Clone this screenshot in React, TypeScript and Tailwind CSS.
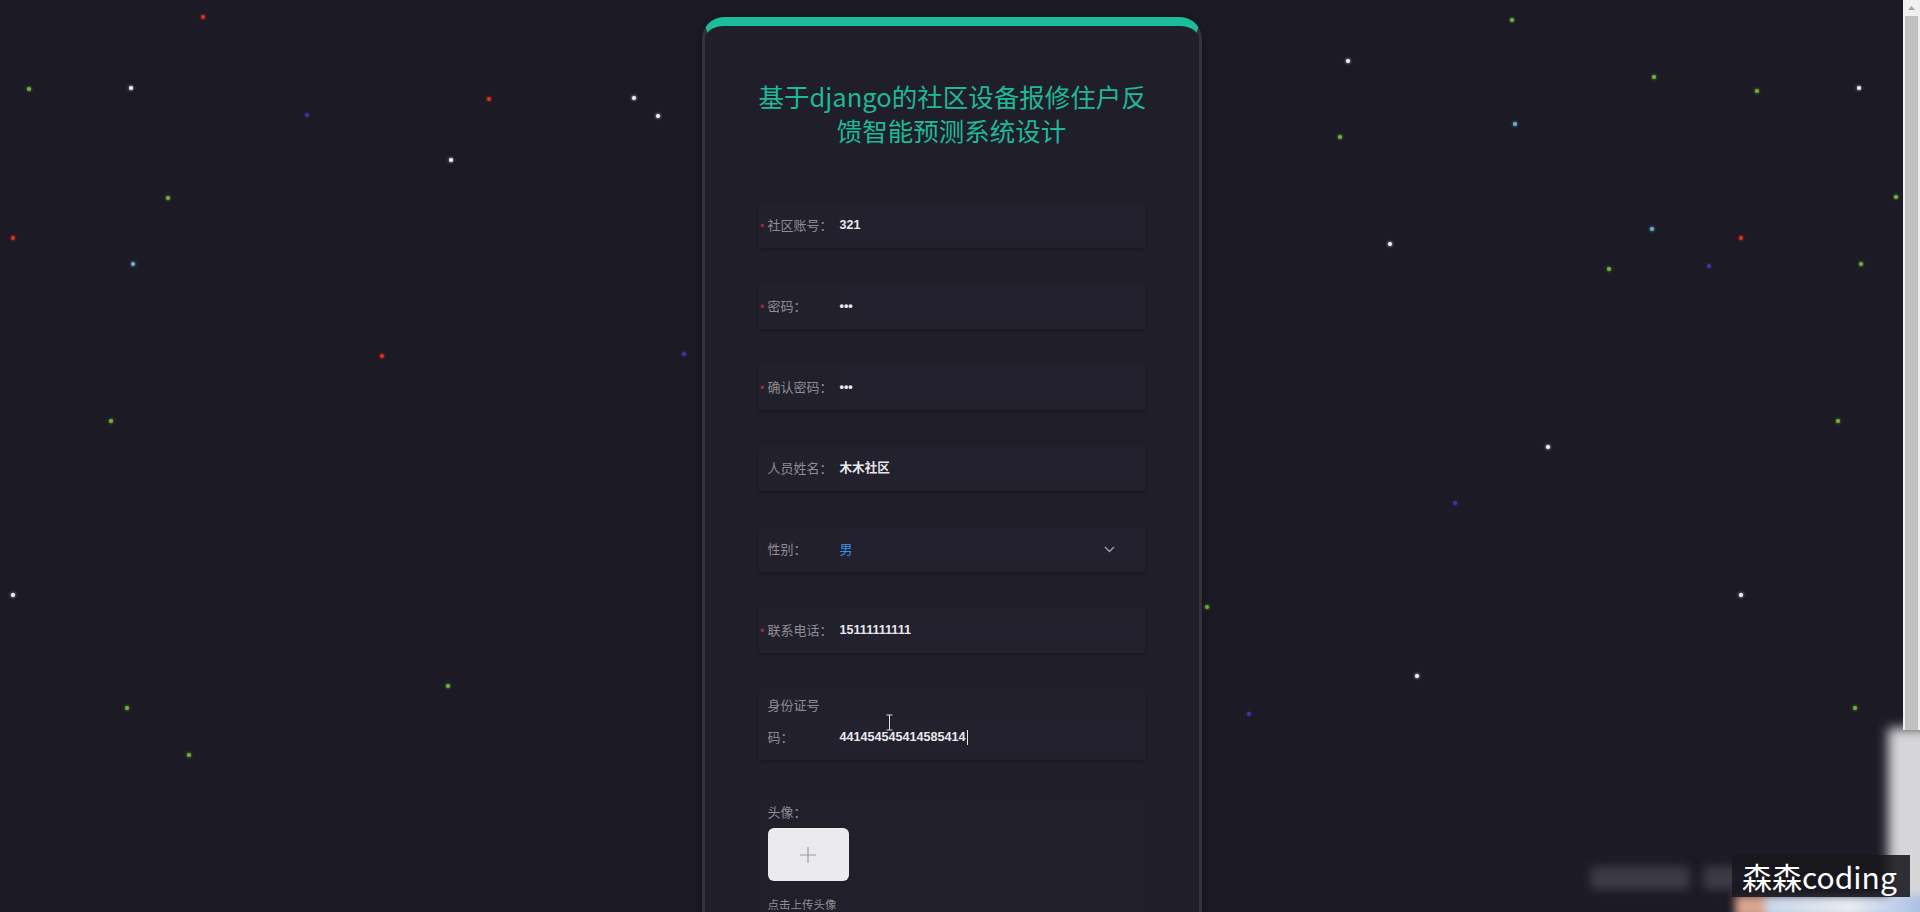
import React from "react";

type Star = { x: number; y: number; c: string };

const stars: Star[] = [
  { x: 203, y: 17, c: "#e0301e" },
  { x: 29, y: 89, c: "#6fb33e" },
  { x: 131, y: 88, c: "#f0f0f0" },
  { x: 307, y: 115, c: "#3c36a8" },
  { x: 489, y: 99, c: "#e0301e" },
  { x: 634, y: 98, c: "#f0f0f0" },
  { x: 658, y: 116, c: "#f0f0f0" },
  { x: 451, y: 160, c: "#f0f0f0" },
  { x: 168, y: 198, c: "#6fb33e" },
  { x: 13, y: 238, c: "#e0301e" },
  { x: 133, y: 264, c: "#6aaed6" },
  { x: 382, y: 356, c: "#e0301e" },
  { x: 684, y: 354, c: "#3c36a8" },
  { x: 111, y: 421, c: "#6fb33e" },
  { x: 13, y: 595, c: "#f0f0f0" },
  { x: 127, y: 708, c: "#6fb33e" },
  { x: 448, y: 686, c: "#6fb33e" },
  { x: 189, y: 755, c: "#6fb33e" },
  { x: 1512, y: 20, c: "#6fb33e" },
  { x: 1348, y: 61, c: "#f0f0f0" },
  { x: 1654, y: 77, c: "#6fb33e" },
  { x: 1757, y: 91, c: "#6fb33e" },
  { x: 1859, y: 88, c: "#f0f0f0" },
  { x: 1515, y: 124, c: "#6aaed6" },
  { x: 1340, y: 137, c: "#6fb33e" },
  { x: 1896, y: 197, c: "#6fb33e" },
  { x: 1390, y: 244, c: "#f0f0f0" },
  { x: 1652, y: 229, c: "#6aaed6" },
  { x: 1741, y: 238, c: "#e0301e" },
  { x: 1609, y: 269, c: "#6fb33e" },
  { x: 1709, y: 266, c: "#3c36a8" },
  { x: 1861, y: 264, c: "#6fb33e" },
  { x: 1838, y: 421, c: "#6fb33e" },
  { x: 1548, y: 447, c: "#f0f0f0" },
  { x: 1455, y: 503, c: "#3c36a8" },
  { x: 1207, y: 607, c: "#6fb33e" },
  { x: 1741, y: 595, c: "#f0f0f0" },
  { x: 1417, y: 676, c: "#f0f0f0" },
  { x: 1249, y: 714, c: "#3c36a8" },
  { x: 1855, y: 708, c: "#6fb33e" },
];

const CJK = "font-['Noto_Sans_CJK_SC','Noto_Sans',sans-serif]";
const VAL = "font-['Liberation_Sans','Noto_Sans_CJK_SC',sans-serif]";

function Label({ req, children }: { req?: boolean; children: React.ReactNode }) {
  return (
    <div className={`relative w-[81px] shrink-0 pl-[9px] text-[13px] leading-[32px] text-[#8e8d98] ${CJK}`}>
      {req && (
        <span className="absolute left-[1px] top-[2px] text-[11px] text-[#d9342b]">*</span>
      )}
      {children}
    </div>
  );
}

function Row({
  req,
  label,
  children,
}: {
  req?: boolean;
  label: React.ReactNode;
  children: React.ReactNode;
}) {
  return (
    <div className="flex h-[46px] items-center bg-[#21202b] py-[7px] shadow-[0_2px_3px_rgba(0,0,0,0.18)]">
      <Label req={req}>{label}</Label>
      <div className="flex h-[32px] flex-1 items-center bg-[#22212d] pr-[30px]">{children}</div>
    </div>
  );
}

function Value({ children }: { children: React.ReactNode }) {
  return (
    <span className={`text-[12.6px] font-semibold text-[#e8e8ec] ${VAL}`}>{children}</span>
  );
}

export default function App() {
  return (
    <div className="relative flex h-[912px] w-full overflow-hidden bg-[#1c1a24]">
      {/* stars */}
      {stars.map((s, i) => (
        <span
          key={i}
          className="absolute h-[4px] w-[4px] rounded-full"
          style={{
            left: s.x - 2,
            top: s.y - 2,
            backgroundColor: s.c,
            boxShadow: `0 0 3px ${s.c}`,
          }}
        />
      ))}

      <main className="relative flex flex-1 justify-center pt-[17px]">
        <div className="h-[960px] w-[500px] shrink-0 rounded-[22px] border-x-[3px] border-t-[9px] border-x-[#32313c] border-t-[#1dbd9c] bg-[#1f1e29] pl-[54px] pr-[54px] pt-[53px] shadow-[0_0_12px_rgba(0,0,0,0.35)]">
          <h1
            className={`whitespace-nowrap text-center text-[25.5px] font-normal leading-[34px] text-[#1db998] ${CJK}`}
          >
            <span className="block">基于django的社区设备报修住户反</span>
            <span className="block">馈智能预测系统设计</span>
          </h1>

          <div className="mt-[55px] flex flex-col gap-[35px]">
            <Row req label="社区账号：">
              <Value>321</Value>
            </Row>
            <Row req label="密码：">
              <Value>•••</Value>
            </Row>
            <Row req label="确认密码：">
              <Value>•••</Value>
            </Row>
            <Row label="人员姓名：">
              <Value>木木社区</Value>
            </Row>
            <Row label="性别：">
              <span className={`text-[13px] text-[#3d8fe8] ${CJK}`}>男</span>
              <svg
                className="ml-auto"
                width="11"
                height="7"
                viewBox="0 0 11 7"
                fill="none"
              >
                <path d="M1 1l4.5 4.5L10 1" stroke="#a3a2ad" strokeWidth="1.3" />
              </svg>
            </Row>
            <Row req label="联系电话：">
              <Value>15111111111</Value>
            </Row>

            <div className="relative flex items-end bg-[#21202b] pb-[7px] pt-[1px] shadow-[0_2px_3px_rgba(0,0,0,0.18)]">
              <Label>
                身份证号
                <br />
                码：
              </Label>
              <div className="flex h-[32px] flex-1 items-center bg-[#22212d]">
                <Value>441454545414585414</Value>
                <span className="ml-[1px] h-[15px] w-[1px] bg-[#e8e8ec]" />
              </div>
              {/* I-beam mouse cursor */}
              <svg
                className="absolute left-[126px] top-[26px]"
                width="9"
                height="17"
                viewBox="0 0 9 17"
                fill="none"
              >
                <path
                  d="M1.5 1h6M4.5 1v15M1.5 16h6"
                  stroke="#1a1a1a"
                  strokeWidth="2.2"
                />
                <path d="M1.5 1h6M4.5 1v15M1.5 16h6" stroke="#e6e6e6" strokeWidth="1" />
              </svg>
            </div>

            <div className="mt-[5px] flex flex-col bg-[#201f2a] pl-[9px]">
              <div className={`text-[13px] leading-[24px] text-[#8e8d98] ${CJK}`}>头像：</div>
              <div className="mt-[4px] flex h-[53px] w-[81px] items-center justify-center rounded-[6px] bg-[#ebebed]">
                <svg width="18" height="18" viewBox="0 0 18 18" fill="none">
                  <path d="M9 1v16M1 9h16" stroke="#9c9ca3" strokeWidth="1.2" />
                </svg>
              </div>
              <div className={`mt-[11px] text-[11.5px] leading-[24px] text-[#8e8d98] ${CJK}`}>
                点击上传头像
              </div>
            </div>
          </div>
        </div>
      </main>

      {/* fake scrollbar */}
      <div className="relative z-10 flex h-[730px] w-[17px] shrink-0 flex-col bg-[#f0f0f0]">
        <div className="flex h-[16px] items-center justify-center">
          <svg width="7" height="4" viewBox="0 0 7 4">
            <path d="M0 4L3.5 0L7 4z" fill="#a3a3a3" />
          </svg>
        </div>
        <div className="mx-[2px] flex-1 bg-[#c1c1c1]" />
      </div>

      {/* blurred video overlay, bottom right */}
      <div className="absolute left-[1888px] top-[728px] h-[200px] w-[50px] bg-[#d6d6d8] blur-[6px]" />
      <div className="absolute left-[1590px] top-[866px] h-[24px] w-[100px] rounded-[6px] bg-[#3b3a45] blur-[5px]" />
      <div className="absolute left-[1703px] top-[866px] h-[24px] w-[40px] rounded-[6px] bg-[#3b3a45] blur-[5px]" />
      <div className="absolute left-[1735px] top-[895px] flex h-[24px] w-[200px] blur-[4px]">
        <div className="w-[30px] bg-[#d9a48e]" />
        <div className="flex-1 bg-gradient-to-r from-[#c9d7ea] via-[#e8ecf2] to-[#9fb6e2]" />
      </div>

      {/* watermark */}
      <div className="absolute left-[1732px] top-[855px] flex h-[42px] w-[178px] items-center bg-[rgba(24,23,30,0.88)] pl-[10px]">
        <span className={`whitespace-nowrap text-[30px] leading-none text-white ${CJK}`}>森森coding</span>
      </div>
    </div>
  );
}
